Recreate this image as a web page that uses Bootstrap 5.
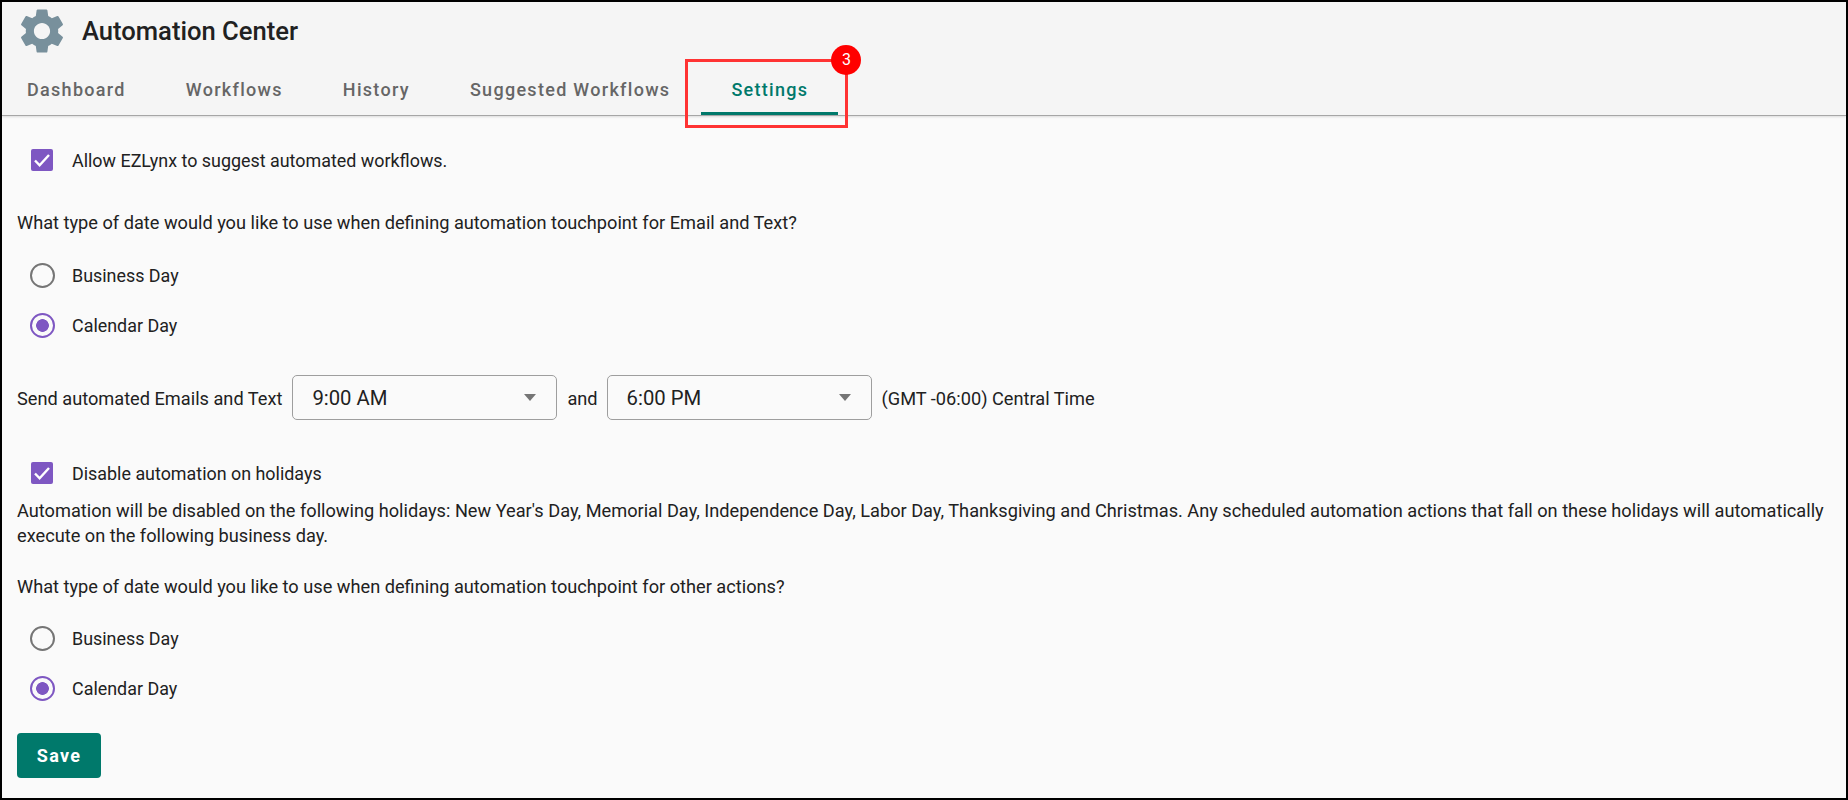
<!DOCTYPE html>
<html lang="en">
<head>
<meta charset="utf-8">
<title>Automation Center</title>
<link rel="stylesheet" href="https://cdn.jsdelivr.net/npm/bootstrap@5.3.0/dist/css/bootstrap.min.css">
<style>
html,body{height:100%;}
body{font-family:Roboto,"Liberation Sans",sans-serif;font-size:18.2px;line-height:24px;color:#212121;background:#fafafa;overflow:hidden;}
.ac-frame{height:800px;border:2px solid #000;background:#fafafa;overflow:hidden;}
.ac-head{height:114px;background:#f5f5f5;border-bottom:1px solid #a6a6a6;box-shadow:0 1px 2px rgba(0,0,0,.12);}
.ac-titlebar{height:58px;padding-left:13px;}
.ac-gear{width:54px;height:54px;display:block;flex:none;}
.ac-title{font-size:25.6px;font-weight:500;line-height:28px;color:#212121;margin:0 0 0 13px;}
.ac-tabs{height:55px;}
.ac-tab.nav-link{height:55px;padding:18px 30px 0;font-size:18px;font-weight:500;letter-spacing:1.3px;line-height:24px;color:#666;border-bottom:3px solid transparent;}
.ac-tab.nav-link:first-child{padding-left:25px;}
.ac-tab.nav-link.active{color:#00796b;border-bottom-color:#00796b;margin-left:1px;}
.ac-markbox{position:absolute;left:-16px;top:-1px;width:163px;height:69px;border:3px solid #f33;pointer-events:none;}
.ac-markdot{position:absolute;left:130px;top:-15px;width:30px;height:30px;border-radius:50%;background:#f00;color:#fff;font-size:16px;line-height:30px;text-align:center;font-weight:400;letter-spacing:0;}
.ac-body{padding:0 15px;}
.ac-check{display:flex;align-items:center;margin:0;padding:0 0 0 14px;min-height:24px;}
.ac-check .form-check-input{float:none;margin:0 19px 0 0;flex:none;}
.ac-check .form-check-input[type=checkbox]{width:22px;height:22px;border-radius:2px;border:0;background-color:#7e57c2;background-size:22px 22px;background-image:url("data:image/svg+xml,%3csvg xmlns='http://www.w3.org/2000/svg' viewBox='0 0 22 22'%3e%3cpath fill='none' stroke='%23fff' stroke-width='2.4' d='M4 11.5l4.6 4.8L18 6'/%3e%3c/svg%3e");}
.ac-check .form-check-input[type=radio]{width:25px;height:25px;margin:0 17px 0 -1px;border:2px solid #757575;background:transparent;}
.ac-check .form-check-input[type=radio]:checked{border-color:#7e57c2;background:radial-gradient(circle,#7e57c2 0,#7e57c2 6px,transparent 6.7px);}
.ac-check .form-check-input:focus{box-shadow:none;}
.ac-check .form-check-label{line-height:24px;font-size:17.9px;padding-top:2px;}
.ac-gap1{margin-top:31px;}
.ac-q{margin:0;line-height:24px;}
.ac-q1{margin-top:38px;}
.ac-r1{margin-top:27px;}
.ac-r2{margin-top:24px;}
.ac-r3{margin-top:26px;}
.ac-timerow{margin-top:37px;height:45px;gap:10px;}
.ac-rowtext{padding-top:2px;}
.ac-rowand{padding-top:2px;margin-right:-1px;}
.ac-time{width:265px;height:45px;flex:none;border:1px solid #9e9e9e;border-radius:5px;font-size:20.3px;color:#212121;padding:1px 12px 0 19px;background-color:transparent;background-position:right 20px center;background-size:12px 7px;background-image:url("data:image/svg+xml,%3csvg xmlns='http://www.w3.org/2000/svg' viewBox='0 0 14 8'%3e%3cpath fill='%23757575' d='M0 0h14L7 8z'/%3e%3c/svg%3e");}
.ac-time:focus{box-shadow:none;border-color:#9e9e9e;}
.ac-disable{margin-top:40px;}
.ac-note{margin:13px 0 0;line-height:24.5px;}
.ac-q2{margin-top:27px;}
.ac-save.btn{display:block;margin-top:32px;width:84px;height:45px;padding:0;background:#00796b;border:0;border-radius:4px;color:#fff;font-size:18px;font-weight:700;letter-spacing:1.25px;}
</style>
</head>
<body>
<div class="ac-frame">
  <header class="ac-head">
    <div class="ac-titlebar d-flex align-items-center">
      <svg class="ac-gear" viewBox="0 0 24 24" aria-hidden="true"><path fill="#78909c" d="M19.14 12.94c.04-.3.06-.61.06-.94 0-.32-.02-.64-.07-.94l2.03-1.58c.18-.14.23-.41.12-.61l-1.92-3.32c-.12-.22-.37-.29-.59-.22l-2.39.96c-.5-.38-1.03-.7-1.62-.94l-.36-2.54c-.04-.24-.24-.41-.48-.41h-3.84c-.24 0-.43.17-.47.41l-.36 2.54c-.59.24-1.13.57-1.62.94l-2.39-.96c-.22-.08-.47 0-.59.22L2.74 8.87c-.12.21-.08.47.12.61l2.03 1.58c-.05.3-.09.63-.09.94s.02.64.07.94l-2.03 1.58c-.18.14-.23.41-.12.61l1.92 3.32c.12.22.37.29.59.22l2.39-.96c.5.38 1.03.7 1.62.94l.36 2.54c.05.24.24.41.48.41h3.84c.24 0 .44-.17.47-.41l.36-2.54c.59-.24 1.13-.56 1.62-.94l2.39.96c.22.08.47 0 .59-.22l1.92-3.32c.12-.22.07-.47-.12-.61l-2.01-1.58zM12 15.6c-1.98 0-3.6-1.62-3.6-3.6s1.62-3.6 3.6-3.6 3.6 1.62 3.6 3.6-1.62 3.6-3.6 3.6z"/></svg>
      <h1 class="ac-title">Automation Center</h1>
    </div>
    <nav class="nav ac-tabs">
      <a class="nav-link ac-tab" href="#">Dashboard</a>
      <a class="nav-link ac-tab" href="#">Workflows</a>
      <a class="nav-link ac-tab" href="#">History</a>
      <a class="nav-link ac-tab" href="#">Suggested Workflows</a>
      <a class="nav-link ac-tab active position-relative" href="#">Settings<span class="ac-markbox"></span><span class="ac-markdot">3</span></a>
    </nav>
  </header>
  <main class="ac-body">
    <div class="ac-check ac-gap1"><input class="form-check-input" type="checkbox" id="c1" checked><label class="form-check-label" for="c1">Allow EZLynx to suggest automated workflows.</label></div>
    <p class="ac-q ac-q1">What type of date would you like to use when defining automation touchpoint for Email and Text?</p>
    <div class="ac-check ac-r1"><input class="form-check-input" type="radio" name="d1" id="r1"><label class="form-check-label" for="r1">Business Day</label></div>
    <div class="ac-check ac-r2"><input class="form-check-input" type="radio" name="d1" id="r2" checked><label class="form-check-label" for="r2">Calendar Day</label></div>
    <div class="d-flex align-items-center ac-timerow">
      <span class="ac-rowtext">Send automated Emails and Text</span>
      <select class="form-select ac-time" aria-label="Start time"><option>9:00 AM</option></select>
      <span class="ac-rowand">and</span>
      <select class="form-select ac-time" aria-label="End time"><option>6:00 PM</option></select>
      <span class="ac-rowtext">(GMT -06:00) Central Time</span>
    </div>
    <div class="ac-check ac-disable"><input class="form-check-input" type="checkbox" id="c2" checked><label class="form-check-label" for="c2">Disable automation on holidays</label></div>
    <p class="ac-note">Automation will be disabled on the following holidays: New Year's Day, Memorial Day, Independence Day, Labor Day, Thanksgiving and Christmas. Any scheduled automation actions that fall on these holidays will automatically execute on the following business day.</p>
    <p class="ac-q ac-q2">What type of date would you like to use when defining automation touchpoint for other actions?</p>
    <div class="ac-check ac-r3"><input class="form-check-input" type="radio" name="d2" id="r3"><label class="form-check-label" for="r3">Business Day</label></div>
    <div class="ac-check ac-r2"><input class="form-check-input" type="radio" name="d2" id="r4" checked><label class="form-check-label" for="r4">Calendar Day</label></div>
    <button type="button" class="btn ac-save">Save</button>
  </main>
</div>
<script src="https://cdn.jsdelivr.net/npm/bootstrap@5.3.0/dist/js/bootstrap.bundle.min.js"></script>
</body>
</html>
